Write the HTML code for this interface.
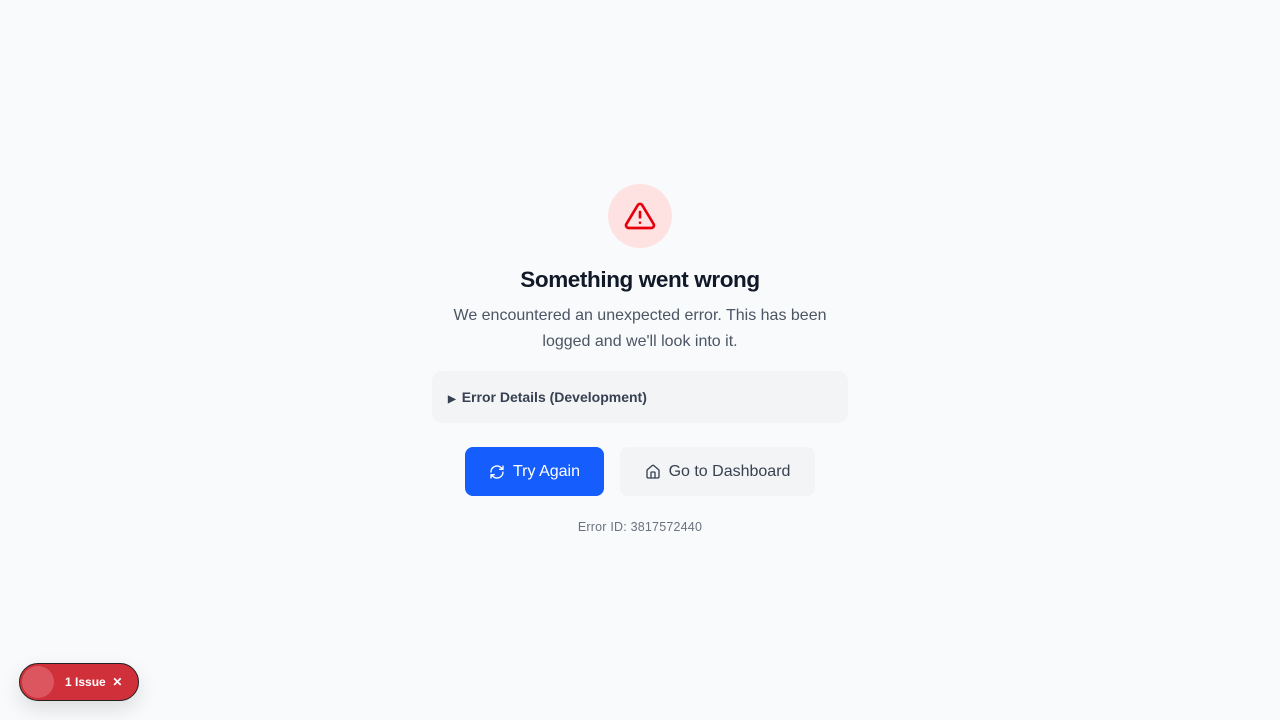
<!DOCTYPE html>
<html><head><meta charset="utf-8"><style>
*{margin:0;padding:0;box-sizing:border-box}
body{width:1280px;height:720px;background:#f8fafc;font-family:"Liberation Sans",sans-serif;position:relative;overflow:hidden}
.abs{position:absolute}
.circ{left:608px;top:184px;width:64px;height:64px;border-radius:50%;background:#fee2e2;display:flex;align-items:center;justify-content:center}
h1{position:absolute;top:267px;width:1280px;text-align:center;font-size:22.5px;font-weight:bold;color:#111827;letter-spacing:-0.4px}
.p{top:303px;left:440px;width:400px;text-align:center;font-size:16px;line-height:26px;color:#4b5563}
.det{left:432px;top:371px;width:416px;height:52px;border-radius:10px;background:#f3f4f6;font-size:14px;font-weight:bold;color:#374151;padding:18px 0 0 16px}
.btn{top:447px;height:49px;border-radius:8px;display:flex;align-items:center;justify-content:center;font-size:16px;gap:8px}
.b1{left:465px;width:139px;background:#155dfc;color:#fff}
.b2{left:620px;width:195px;background:#f3f4f6;color:#374151}
.id{top:520px;width:1280px;text-align:center;font-size:12.5px;color:#6b7280;letter-spacing:0.2px}
.pill{left:19px;top:663px;width:120px;height:38px;border-radius:19px;background:#d0303a;border:1px solid #222;box-shadow:0 8px 20px rgba(0,0,0,.12)}
.pill .c{position:absolute;left:2px;top:2px;width:32px;height:32px;border-radius:50%;background:#dc5660}
.pill .t{position:absolute;left:45px;top:11px;font-size:12px;font-weight:bold;color:#fff}
</style></head><body>
<div class="abs circ"><svg width="32" height="32" viewBox="0 0 24 24" fill="none" stroke="#e7000b" stroke-width="2" stroke-linecap="round" stroke-linejoin="round"><path d="M10.3 3.9 1.8 18a2 2 0 0 0 1.7 3h17a2 2 0 0 0 1.7-3L13.7 3.9a2 2 0 0 0-3.4 0z"/><path d="M12 9v4M12 17h.01"/></svg></div>
<h1>Something went wrong</h1>
<div class="abs p">We encountered an unexpected error. This has been logged and we'll look into it.</div>
<div class="abs det"><span style="font-size:10px;margin-right:6px">▶</span>Error Details (Development)</div>
<div class="abs btn b1"><svg width="16" height="16" viewBox="0 0 24 24" fill="none" stroke="#fff" stroke-width="2" stroke-linecap="round" stroke-linejoin="round"><path d="M3 12a9 9 0 0 1 15-6.7L21 8M21 3v5h-5M21 12a9 9 0 0 1-15 6.7L3 16M8 16H3v5"/></svg>Try Again</div>
<div class="abs btn b2"><svg width="16" height="16" viewBox="0 0 24 24" fill="none" stroke="#374151" stroke-width="2" stroke-linecap="round" stroke-linejoin="round"><path d="M15 21v-8a1 1 0 0 0-1-1h-4a1 1 0 0 0-1 1v8"/><path d="M3 10a2 2 0 0 1 .7-1.5l7-6a2 2 0 0 1 2.6 0l7 6A2 2 0 0 1 21 10v9a2 2 0 0 1-2 2H5a2 2 0 0 1-2-2z"/></svg>Go to Dashboard</div>
<div class="abs id">Error ID: 3817572440</div>
<div class="abs pill"><div class="c"></div><div class="t">1 Issue &nbsp;✕</div></div>
</body></html>
